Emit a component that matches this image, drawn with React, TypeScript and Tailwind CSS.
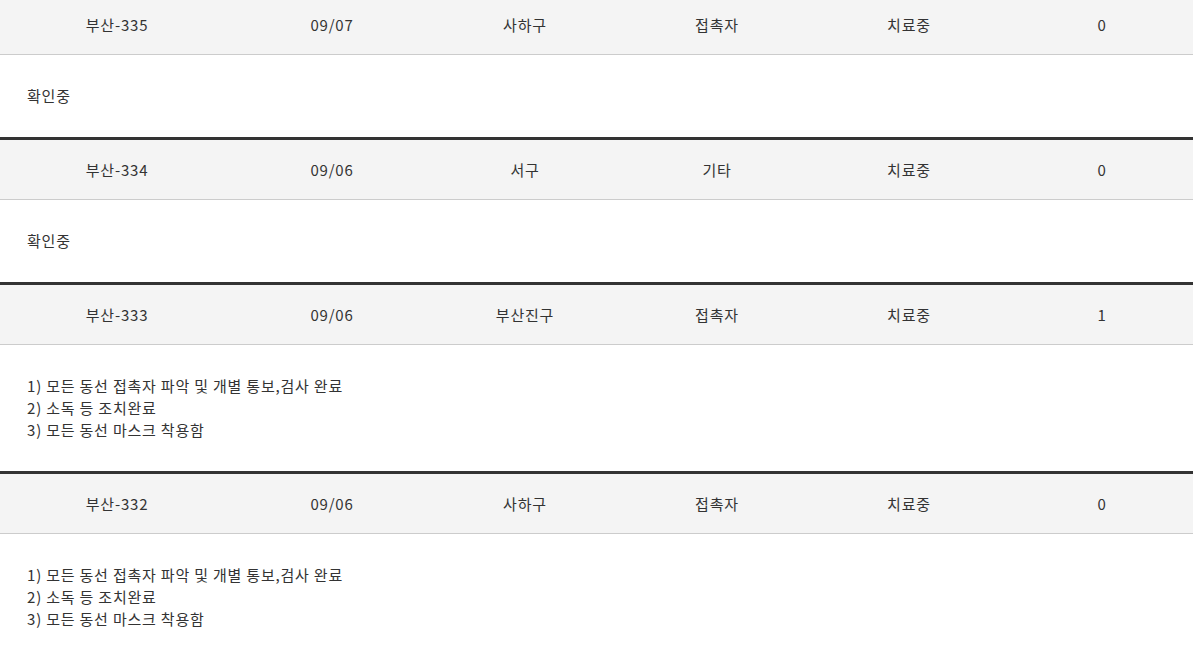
import React from 'react';

type Case = {
  no: string;
  date: string;
  area: string;
  route: string;
  status: string;
  contacts: string;
  notes: string[];
};

const cases: Case[] = [
  { no: '부산-335', date: '09/07', area: '사하구', route: '접촉자', status: '치료중', contacts: '0', notes: ['확인중'] },
  { no: '부산-334', date: '09/06', area: '서구', route: '기타', status: '치료중', contacts: '0', notes: ['확인중'] },
  {
    no: '부산-333',
    date: '09/06',
    area: '부산진구',
    route: '접촉자',
    status: '치료중',
    contacts: '1',
    notes: ['1) 모든 동선 접촉자 파악 및 개별 통보,검사 완료', '2) 소독 등 조치완료', '3) 모든 동선 마스크 착용함'],
  },
  {
    no: '부산-332',
    date: '09/06',
    area: '사하구',
    route: '접촉자',
    status: '치료중',
    contacts: '0',
    notes: ['1) 모든 동선 접촉자 파악 및 개별 통보,검사 완료', '2) 소독 등 조치완료', '3) 모든 동선 마스크 착용함'],
  },
];

function CaseRow({ data, last }: { data: Case; last: boolean }) {
  const cells = [data.no, data.date, data.area, data.route, data.status, data.contacts];
  return (
    <div className={last ? '' : 'border-b-[3px] border-[#333]'}>
      <div className="grid h-[60px] grid-cols-[234px_196px_190px_194px_190px_196px] items-center border-b border-[#cccccc] bg-[#f4f4f4]">
        {cells.map((c, i) => (
          <div key={i} className="text-center">
            {c}
          </div>
        ))}
      </div>
      <div className="px-[27px] py-[30px]">
        {data.notes.map((n, i) => (
          <p key={i}>{n}</p>
        ))}
      </div>
    </div>
  );
}

export default function App() {
  return (
    <div className="h-[656px] w-[1193px] overflow-hidden bg-white font-['Noto_Sans_CJK_KR','Noto_Sans',sans-serif] text-[15px] leading-[22px] tracking-[0.8px] text-[#333]">
      <div className="-mt-[5px]">
        {cases.map((c, i) => (
          <CaseRow key={c.no} data={c} last={i === cases.length - 1} />
        ))}
      </div>
    </div>
  );
}
